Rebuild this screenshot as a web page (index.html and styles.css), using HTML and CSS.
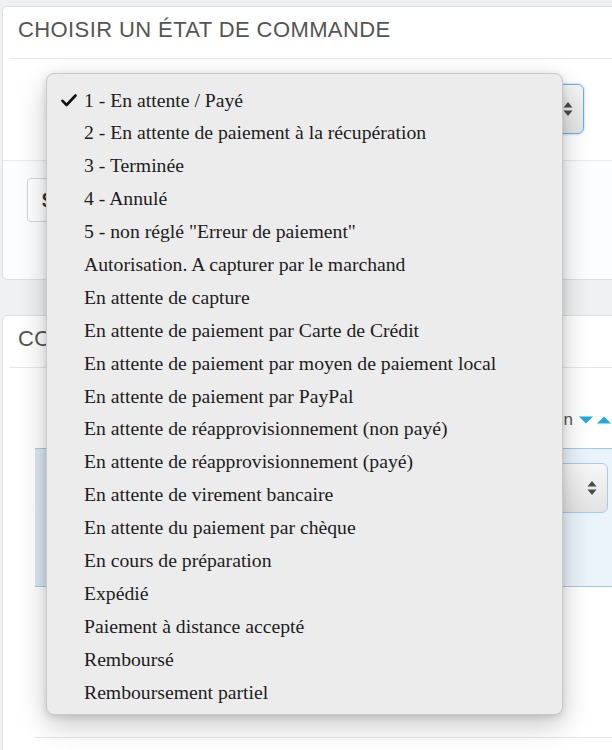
FILE: index.html
```html
<!DOCTYPE html>
<html lang="fr">
<head>
<meta charset="utf-8">
<title>Choisir un état de commande</title>
<link rel="stylesheet" href="styles.css">
</head>
<body>
<div class="page">
  <section class="panel">
    <h2 class="panel-heading">Choisir un état de commande</h2>
    <div class="panel-body">
      <div class="fake-select focused">
        <svg class="updown" width="10" height="16" viewBox="0 0 10 16"><path d="M5 1 L9.5 6.5 H0.5 Z M5 15 L9.5 9.5 H0.5 Z" fill="#4a4a4a"/></svg>
      </div>
    </div>
    <div class="panel-footer">
      <div class="btn"><span class="btn-icon">$</span></div>
    </div>
  </section>

  <section class="panel second">
    <h2 class="panel-heading"><span class="clip">Co</span></h2>
    <div class="panel-body2">
      <div class="th-row">
        <span class="th-label">n</span>
        <svg class="sort" width="32" height="8" viewBox="0 0 32 8"><path d="M0 0.5 H14 L7 7.5 Z" fill="#1ea9e1"/><path d="M18 7.5 H32 L25 0.5 Z" fill="#1ea9e1"/></svg>
      </div>
      <div class="hl-row">
        <div class="fake-select inner">
          <svg class="updown" width="10" height="16" viewBox="0 0 10 16"><path d="M5 1 L9.5 6.5 H0.5 Z M5 15 L9.5 9.5 H0.5 Z" fill="#4a4a4a"/></svg>
        </div>
      </div>
      <div class="empty-row"></div>
      <div class="end-line"></div>
    </div>
  </section>

  <ul class="menu">
    <li class="checked"><svg class="check" width="16" height="13" viewBox="0 0 16 13"><path d="M1.5 6.8 L5.6 11 L14.5 1.5" fill="none" stroke="#111" stroke-width="2.6" stroke-linecap="round" stroke-linejoin="round"/></svg>1 - En attente / Payé</li>
    <li>2 - En attente de paiement à la récupération</li>
    <li>3 - Terminée</li>
    <li>4 - Annulé</li>
    <li>5 - non réglé "Erreur de paiement"</li>
    <li>Autorisation. A capturer par le marchand</li>
    <li>En attente de capture</li>
    <li>En attente de paiement par Carte de Crédit</li>
    <li>En attente de paiement par moyen de paiement local</li>
    <li>En attente de paiement par PayPal</li>
    <li>En attente de réapprovisionnement (non payé)</li>
    <li>En attente de réapprovisionnement (payé)</li>
    <li>En attente de virement bancaire</li>
    <li>En attente du paiement par chèque</li>
    <li>En cours de préparation</li>
    <li>Expédié</li>
    <li>Paiement à distance accepté</li>
    <li>Remboursé</li>
    <li>Remboursement partiel</li>
  </ul>
</div>
</body>
</html>
```

FILE: styles.css
```css
html, body {
  margin: 0;
  padding: 0;
}
body {
  background: #eff1f2;
  overflow: hidden;
  font-family: "Liberation Sans", Arial, sans-serif;
  width: 612px;
  height: 750px;
}
.page {
  position: relative;
  padding: 6px 0 0 2px;
  margin-right: -14px;
  height: 744px;
  overflow: hidden;
}
.panel {
  background: #fff;
  border: 1px solid #dde0e3;
  border-radius: 5px;
}
.panel.second {
  margin-top: 35px;
  height: 600px;
}
.panel-heading {
  margin: 0 6px;
  height: 51px;
  border-bottom: 1px solid #e6e8ea;
  padding-left: 9px;
  font-size: 22px;
  font-weight: normal;
  letter-spacing: 0.4px;
  line-height: 46px;
  color: #555;
  text-transform: uppercase;
  white-space: nowrap;
  overflow: hidden;
}
.clip {
  display: inline-block;
  vertical-align: top;
}
.panel-body {
  height: 101px;
  box-sizing: border-box;
  padding: 25px 0 0 48px;
}
.fake-select {
  box-sizing: border-box;
  height: 50px;
  border-radius: 6px;
  background: linear-gradient(#f6f6f6, #e3e3e3);
  display: flex;
  align-items: center;
  justify-content: flex-end;
  padding: 0 10px 0 14px;
}
.fake-select.focused {
  width: 533px;
  border: 1px solid #6aaee6;
  box-shadow: 0 0 3px rgba(102, 175, 233, 0.6);
}
.fake-select.inner {
  width: 560px;
  border: 1px solid #a7cdea;
}
.updown {
  display: block;
}
.panel-footer {
  border-top: 1px solid #e8ebee;
  background: #fcfdfe;
  height: 119px;
  box-sizing: border-box;
  padding: 17px 0 0 24px;
  border-radius: 0 0 5px 5px;
}
.btn {
  display: inline-flex;
  align-items: center;
  width: 150px;
  height: 44px;
  box-sizing: border-box;
  border: 1px solid #d6d9dc;
  border-radius: 4px;
  background: #fff;
  padding: 0 14px;
}
.btn-icon {
  font-size: 20px;
  font-weight: bold;
  color: #333;
}
.panel-body2 {
  padding: 0 0 0 32px;
}
.th-row {
  height: 80px;
  display: flex;
  justify-content: flex-end;
  align-items: center;
  gap: 6px;
  padding: 24px 14px 0 0;
  box-sizing: border-box;
  color: #555;
  font-size: 17px;
}
.th-label {
  line-height: 20px;
}
.sort {
  display: block;
}
.hl-row {
  height: 139px;
  box-sizing: border-box;
  border-top: 1px solid #9fcbe9;
  border-bottom: 1px solid #9fcbe9;
  background: linear-gradient(90deg, #dbe7f1, #ecf4fb);
  padding-top: 14px;
  display: flex;
  justify-content: flex-end;
  padding-right: 17px;
}
.empty-row {
  height: 150px;
}
.end-line {
  border-top: 1px solid #e3e5e7;
}
.menu {
  position: absolute;
  left: 46px;
  top: 73px;
  width: 517px;
  height: 642px;
  box-sizing: border-box;
  margin: 0;
  padding: 9.5px 0 0 0;
  list-style: none;
  background: #ececec;
  border: 1px solid #c9c9c9;
  border-radius: 8px;
  box-shadow: 0 10px 28px rgba(0, 0, 0, 0.22), 0 2px 6px rgba(0, 0, 0, 0.12);
  font-family: "Liberation Serif", "Times New Roman", serif;
  font-size: 19.7px;
  color: #1d1d1d;
}
.menu li {
  position: relative;
  height: 32.9px;
  line-height: 32.9px;
  padding-left: 37px;
  white-space: nowrap;
}
.check {
  position: absolute;
  left: 14px;
  top: 10px;
}
```
